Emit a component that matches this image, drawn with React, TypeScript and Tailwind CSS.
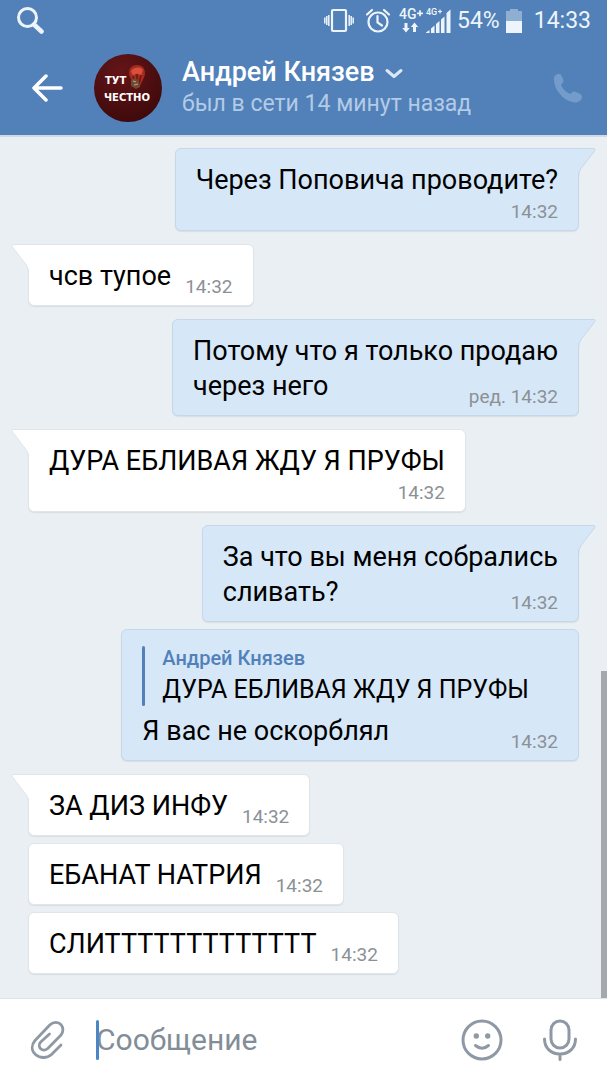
import type { ReactNode } from "react";

interface Quote {
  author: string;
  text: string;
}

interface Message {
  id: number;
  mine?: boolean;
  lines: string[];
  time: string;
  edited?: boolean;
  quote?: Quote;
  // where the time stamp goes relative to the text
  stamp: "inline" | "below" | "corner";
}

const GROUPS: Message[][] = [
  [
    {
      id: 1,
      mine: true,
      lines: ["Через Поповича проводите?"],
      time: "14:32",
      stamp: "below",
    },
  ],
  [{ id: 2, lines: ["чсв тупое"], time: "14:32", stamp: "inline" }],
  [
    {
      id: 3,
      mine: true,
      lines: ["Потому что я только продаю", "через него"],
      time: "14:32",
      edited: true,
      stamp: "corner",
    },
  ],
  [
    {
      id: 4,
      lines: ["ДУРА ЕБЛИВАЯ ЖДУ Я ПРУФЫ"],
      time: "14:32",
      stamp: "below",
    },
  ],
  [
    {
      id: 5,
      mine: true,
      lines: ["За что вы меня собрались", "сливать?"],
      time: "14:32",
      stamp: "corner",
    },
    {
      id: 6,
      mine: true,
      lines: ["Я вас не оскорблял"],
      time: "14:32",
      quote: { author: "Андрей Князев", text: "ДУРА ЕБЛИВАЯ ЖДУ Я ПРУФЫ" },
      stamp: "corner",
    },
  ],
  [
    { id: 7, lines: ["ЗА ДИЗ ИНФУ"], time: "14:32", stamp: "inline" },
    { id: 8, lines: ["ЕБАНАТ НАТРИЯ"], time: "14:32", stamp: "inline" },
    { id: 9, lines: ["СЛИТТТТТТТТТТТТТ"], time: "14:32", stamp: "inline" },
  ],
];

export default function App() {
  return (
    <div className="flex min-h-screen flex-col bg-[#eaeff3] font-['Roboto',sans-serif] text-black">
      <header className="bg-[#5181b8] text-white">
        <StatusBar />
        <ChatHeader />
      </header>

      <main className="relative flex flex-1 flex-col gap-[13px] border-t-2 border-[#d3d9e0] px-7 pt-[11px] pb-6">
        {GROUPS.map((group) => (
          <div key={group[0].id} className="flex flex-col gap-[7px]">
            {group.map((message, i) => (
              <Bubble key={message.id} message={message} tail={i === 0} />
            ))}
          </div>
        ))}
        <div className="absolute right-0 bottom-0 h-[38%] w-1.5 bg-[#a4a9ae]" />
      </main>

      <Composer />
    </div>
  );
}

function StatusBar() {
  return (
    <div className="flex h-[42px] items-center justify-between pr-4 pl-4 text-[#eef4fb]">
      <svg width="28" height="28" viewBox="0 0 28 28" fill="none" stroke="currentColor">
        <circle cx="11.5" cy="10.500" r="9" strokeWidth="3" />
        <path d="M18 17.500l7.500 7" strokeWidth="4.500" strokeLinecap="round" />
      </svg>
      <div className="flex items-center text-[23px] leading-7">
        <svg width="32" height="26" viewBox="0 0 32 26" fill="none" stroke="currentColor" strokeWidth="2">
          <rect x="9" y="2" width="14" height="21" rx="1" strokeWidth="2.200" />
          <path d="M5.800 7v11M1.800 9.500v6M26.200 7v11M30.200 9.500v6M3.800 8v9M28.200 8v9" strokeWidth="1.500" />
        </svg>
        <svg className="ml-2.5" width="26" height="26" viewBox="0 0 26 26" fill="none" stroke="currentColor" strokeWidth="2.200">
          <circle cx="13" cy="14" r="9.500" />
          <path d="M12.500 8v6.500l4.500 3M2 6.500L7 2M24 6.500L19 2" strokeLinecap="round" />
        </svg>
        <svg className="ml-2 font-['Roboto',sans-serif]" width="54" height="28" viewBox="0 0 54 28" fill="currentColor">
          <text x="0" y="12" fontSize="14" fontWeight="500">4G</text>
          <path d="M18 6.300h6M21 3.300v6" stroke="currentColor" strokeWidth="1.700" />
          <text x="27" y="8" fontSize="9" fontWeight="500">4G</text>
          <path d="M39 4.500h4M41 2.500v4" stroke="currentColor" strokeWidth="1.200" />
          <path d="M5.500 16h3v5h2.200L7 25.500 3.300 21h2.200zM14 25h3v-5h2.200L15.500 15.500 11.800 20H14z" />
          <path d="M27 26v-.5l3.500-2.500v3zM32 26v-4.500l3.500-3V26zM37 26v-9l3.500-3V26zM42 26V12.500l3.500-3V26zM47.500 26V6l4-3.500V26z" />
        </svg>
        <span className="ml-1">54%</span>
        <svg className="ml-1.5" width="16" height="26" viewBox="0 0 16 26" fill="currentColor">
          <path d="M4 1h8v2h4v10H0V3h4z" opacity=".4" />
          <path d="M0 13h16v12H0z" />
        </svg>
        <span className="ml-3">14:33</span>
      </div>
    </div>
  );
}

function ChatHeader() {
  return (
    <div className="flex h-[93px] items-center pr-6 pb-0.5 pl-8">
      <button type="button" aria-label="Назад">
        <svg width="31" height="28" viewBox="0 0 31 28" fill="none" stroke="currentColor" strokeWidth="3.500" strokeLinecap="round" strokeLinejoin="round">
          <path d="M29 14H2M14 2L2 14l12 12" />
        </svg>
      </button>
      <Avatar />
      <div className="ml-5 flex-1">
        <button type="button" className="flex items-center gap-2.5">
          <h1 className="text-[27px] leading-8 font-medium">Андрей Князев</h1>
          <svg className="mt-1" width="18" height="11" viewBox="0 0 18 11" fill="none" stroke="#dbe7f4" strokeWidth="3" strokeLinecap="round" strokeLinejoin="round">
            <path d="M2 2.500l7 6 7-6" />
          </svg>
        </button>
        <p className="text-[23px] leading-8 text-[#b3cbe6]">был в сети 14 минут назад</p>
      </div>
      <button type="button" aria-label="Позвонить">
        <svg width="30" height="30" viewBox="0 0 30 30" fill="#739ccb">
          <path d="M1 6C1 3 3 1 6 1c2 0 3 2 4 5 .8 2 .6 3-1 4.500-1 1-1 1.500-.3 2.800 1.500 3 4 5.500 7 7 1.300.7 1.800.6 2.800-.4 1.500-1.500 2.500-1.800 4.500-1 3.500 1.400 6 2.500 6 4.500 0 3.500-3 6-7 6C12 29 1 18 1 6z" />
        </svg>
      </button>
    </div>
  );
}

function Avatar() {
  return (
    <svg className="ml-[31px] shrink-0" width="68" height="68" viewBox="0 0 68 68">
      <defs>
        <radialGradient id="avatar" cx=".4" cy=".25" r=".8">
          <stop offset="0" stopColor="#641517" />
          <stop offset="1" stopColor="#3d090b" />
        </radialGradient>
      </defs>
      <circle cx="34" cy="34" r="34" fill="url(#avatar)" />
      <path d="M35 19c0-5 3-8 8-8 5 0 8 3 8 8 0 4-3 8-5 13l-6 2c0-6-5-10-5-15z" fill="#a52a20" />
      <path d="M37 17c2-4 10-5 12-1l-2 6c-2-3-6-3-8 0z" fill="#d9503a" />
      <path d="M39 22l2 8M47 21l-2 9M43 20v9" stroke="#6e1713" strokeWidth="1.500" />
      <path d="M37 26l4-2 4 3 1 6-4 2-5-3z" fill="#6b4a36" />
      <path d="M39 27l3 1M40 31l4-1" stroke="#d09a76" strokeWidth="1.200" />
      <g fill="#fff" fontFamily="DejaVu Sans" fontWeight="700" fontSize="10">
        <text x="11" y="30">ТУТ</text>
        <text x="10" y="47">ЧЕСТНО</text>
      </g>
    </svg>
  );
}

function Bubble({ message, tail }: { message: Message; tail: boolean }) {
  const { mine, lines, time, edited, quote, stamp } = message;

  const text = (
    <p className="col-start-1 row-start-1 mb-[3px] text-[27px] leading-[35px]">
      {lines.map((line) => (
        <span key={line} className="block">
          {line}
        </span>
      ))}
    </p>
  );
  const stampText = (
    <time className="col-start-1 row-start-1 block self-end text-right text-[19px] leading-[21px] text-[#8c9196]">
      {edited ? "ред. " : ""}
      {time}
    </time>
  );

  return (
    <article
      className={`relative rounded-md border px-5 pt-3.5 pb-2 shadow-[0_1px_1px_rgba(0,30,60,0.08)] ${
        mine
          ? "self-end border-[#c5d8ea] bg-[#d6e7f8]"
          : "self-start border-[#e0e5e9] bg-white"
      }`}
    >
      {tail ? <Tail mine={mine} /> : null}
      {quote ? (
        <blockquote className="mt-0.5 mb-2 flex gap-[17px] pr-[29px]">
          <span className="w-[3px] rounded-sm bg-[#5181b8]" />
          <div>
            <cite className="block text-[20px] leading-6 font-medium text-[#5181b8] not-italic">
              {quote.author}
            </cite>
            <p className="pt-1 text-[25px] leading-8">{quote.text}</p>
          </div>
        </blockquote>
      ) : null}
      <Body stamp={stamp}>
        {text}
        {stampText}
      </Body>
    </article>
  );
}

function Body({ stamp, children }: { stamp: Message["stamp"]; children: ReactNode }) {
  if (stamp === "inline") {
    return <div className="flex items-end gap-3.5">{children}</div>;
  }
  if (stamp === "below") {
    return <div>{children}</div>;
  }
  return <div className="grid">{children}</div>;
}

function Tail({ mine = false }: { mine?: boolean }) {
  return (
    <svg
      className={`absolute -top-px ${mine ? "-right-[18px] -scale-x-100" : "-left-[18px]"}`}
      width="26"
      height="30"
      viewBox="0 0 26 30"
    >
      <path d="M1.500.5H26V30H18V27Q17.500 23.500 15 20.500L1.500 3Q.5 1 1.500.5z" fill={mine ? "#d6e7f8" : "#fff"} />
      <path
        d="M26 .5H1.500Q.5 1 1.500 3L15 20.500Q17.500 23.500 17.500 30"
        fill="none"
        stroke={mine ? "#c5d8ea" : "#e0e5e9"}
      />
    </svg>
  );
}

function Composer() {
  return (
    <footer className="flex h-[82px] items-center border-t border-[#dfe4e8] bg-white pr-[30px] pl-[30px] text-[#8f99a5]">
      <button type="button" aria-label="Прикрепить файл">
        <svg width="36" height="40" viewBox="0 0 36 40" fill="none" stroke="currentColor" strokeWidth="2.800" strokeLinecap="round" strokeLinejoin="round">
          <path d="M31 25L21.500 34.500C17 38.500 10 38.500 5.500 34.500 1.200 30.500 1.200 25 5 20.500L20 4.800C23.500 1.500 28.500 1.700 31 4.600 33.500 7.500 33.500 12 31 15L18 28.200C15.500 30.500 12.500 30.500 10.700 28.700 8.800 26.800 8.800 24 10.700 22L19.500 14" />
        </svg>
      </button>
      <div className="relative ml-7 flex min-w-0 flex-1 items-center pl-0.5">
        <span className="absolute left-0.5 h-10 w-[3px] rounded-sm bg-[#4a86c5]" />
        <input
          type="text"
          aria-label="Сообщение"
          placeholder="Сообщение"
          className="w-full bg-transparent text-[30px] leading-10 text-black outline-none placeholder:text-[#828d98]"
        />
      </div>
      <button type="button" aria-label="Смайлы">
        <svg width="42" height="42" viewBox="0 0 42 42" fill="none" stroke="currentColor" strokeWidth="3" strokeLinecap="round">
          <circle cx="21" cy="21" r="19" />
          <path d="M14.500 26.500q6.500 5.500 13 0" />
          <g fill="currentColor" stroke="none">
            <circle cx="15.300" cy="17" r="2.700" />
            <circle cx="26.700" cy="17" r="2.700" />
          </g>
        </svg>
      </button>
      <button type="button" aria-label="Голосовое сообщение" className="ml-10">
        <svg width="34" height="42" viewBox="0 0 34 42" fill="none" stroke="currentColor" strokeWidth="3" strokeLinecap="round">
          <rect x="8" y="2" width="18" height="27" rx="9" />
          <path d="M1.500 20c0 9 6.500 15 15.500 15s15.500-6 15.500-15M17 35.500v5" />
        </svg>
      </button>
    </footer>
  );
}
